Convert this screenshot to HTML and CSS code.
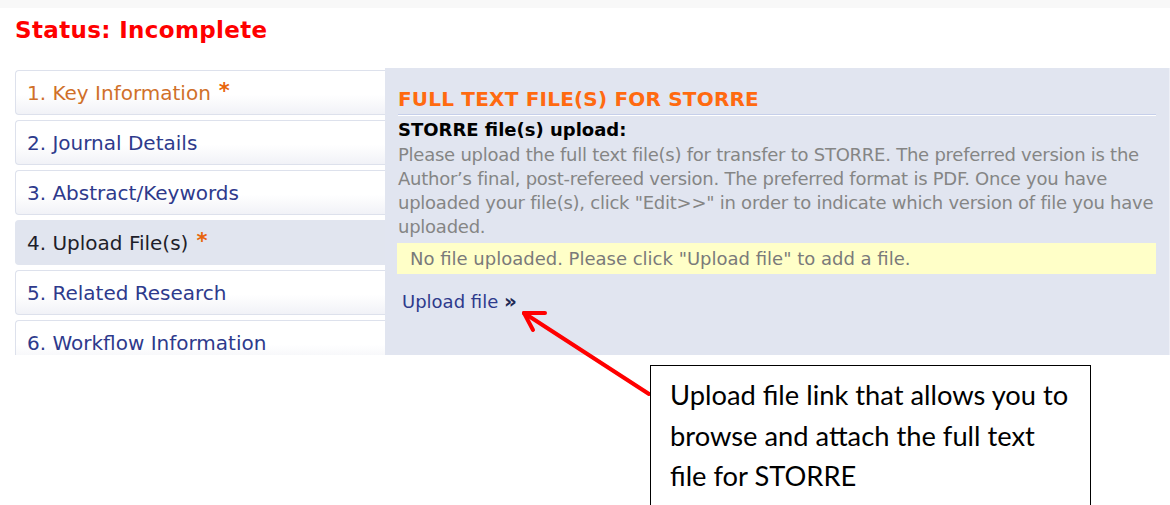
FILE: index.html
```html
<!DOCTYPE html>
<html>
<head>
<meta charset="utf-8">
<link rel="stylesheet" href="styles.css">
</head>
<body>
<div class="topstrip"></div>
<h1 class="status">Status: Incomplete</h1>
<div class="workspace">
  <ul class="tabs">
    <li class="tab tab-done">1. Key Information <span class="req">*</span></li>
    <li class="tab">2. Journal Details</li>
    <li class="tab">3. Abstract/Keywords</li>
    <li class="tab tab-active">4. Upload File(s) <span class="req">*</span></li>
    <li class="tab">5. Related Research</li>
    <li class="tab">6. Workflow Information</li>
  </ul>
  <section class="panel">
    <h2 class="panel-title">FULL TEXT FILE(S) FOR STORRE</h2>
    <h3 class="panel-sub">STORRE file(s) upload:</h3>
    <p class="panel-help">Please upload the full text file(s) for transfer to STORRE. The preferred version is the Author’s final, post-refereed version. The preferred format is PDF. Once you have uploaded your file(s), click "Edit&gt;&gt;" in order to indicate which version of file you have uploaded.</p>
    <div class="notice">No file uploaded. Please click "Upload file" to add a file.</div>
    <a class="upload-link" href="#">Upload file <span class="chev">»</span></a>
  </section>
</div>

<svg class="arrow" width="1170" height="505" viewBox="0 0 1170 505">
  <g stroke="#ff0000" stroke-width="4" stroke-linecap="round" fill="none">
    <line x1="649" y1="394" x2="524" y2="313"/>
    <line x1="524" y1="313" x2="545" y2="313"/>
    <line x1="524" y1="313" x2="533" y2="330"/>
  </g>
</svg>

<div class="callout">Upload file link that allows you to browse and attach the full text file for STORRE</div>
</body>
</html>
```

FILE: styles.css
```css
html, body {
  margin: 0;
  padding: 0;
  background: #ffffff;
  width: 1170px;
  height: 505px;
  overflow: hidden;
  position: relative;
}

.topstrip {
  height: 8px;
  background: #f8f8f8;
}

.status {
  margin: 0;
  padding: 8px 0 0 15px;
  height: 60px;
  box-sizing: border-box;
  font-family: "DejaVu Sans", Verdana, sans-serif;
  font-weight: bold;
  font-size: 23px;
  line-height: 28px;
  color: #ff0000;
  letter-spacing: 0.35px;
}

.workspace {
  display: flex;
  height: 287px;
  overflow: hidden;
}

.tabs {
  list-style: none;
  margin: 2px 0 0 15px;
  padding: 0;
  width: 370px;
  display: flex;
  flex-direction: column;
  gap: 5px;
}

.tab {
  height: 45px;
  box-sizing: border-box;
  flex: none;
  display: flex;
  align-items: center;
  padding: 0 0 0 11px;
  border: 1px solid #dde1ec;
  border-right: none;
  border-radius: 4px 0 0 4px;
  background: linear-gradient(#ffffff 0%, #ffffff 55%, #f1f2f7 100%);
  font-family: "DejaVu Sans", Verdana, sans-serif;
  font-size: 20px;
  color: #2e3a8c;
}

.tab-done {
  color: #d0702a;
}

.tab-active {
  background: #e1e5ef;
  border-color: #e1e5ef;
  color: #1e1e2a;
}

.req {
  color: #e8650c;
  font-weight: bold;
  margin-left: 8px;
  font-size: 21px;
  align-self: flex-start;
  margin-top: 8px;
}

.panel {
  width: 785px;
  background: #e1e5f0;
  padding: 0 0 0 13px;
  box-sizing: border-box;
  font-family: "DejaVu Sans", Verdana, sans-serif;
  border-right: 1px solid #eef0f7;
}

.panel-title {
  margin: 19px 13px 0 0;
  font-size: 20px;
  font-weight: bold;
  color: #ff6a10;
  line-height: 24px;
  padding-bottom: 3px;
  border-bottom: 1px solid #c6cfea;
  box-shadow: 0 1px 0 #ffffff;
  letter-spacing: 0.2px;
}

.panel-sub {
  margin: 5px 0 0 0;
  font-size: 18px;
  font-weight: bold;
  color: #000000;
  line-height: 20px;
}

.panel-help {
  margin: 3px 0 0 0;
  font-size: 18px;
  line-height: 24px;
  color: #858585;
  letter-spacing: -0.25px;
}

.notice {
  margin: 4px 13px 0 -1px;
  height: 31px;
  box-sizing: border-box;
  padding: 1px 0 0 13px;
  line-height: 30px;
  background: #ffffc8;
  font-size: 18px;
  color: #7a7a7a;
}

.upload-link {
  display: inline-block;
  margin: 16px 0 0 4px;
  font-size: 18px;
  line-height: 22px;
  color: #2e3a8c;
  text-decoration: none;
}

.chev {
  color: #1f2a55;
  font-weight: bold;
  font-size: 20px;
}

.arrow {
  position: absolute;
  left: 0;
  top: 0;
  pointer-events: none;
}

.callout {
  position: absolute;
  left: 650px;
  top: 365px;
  width: 441px;
  height: 160px;
  box-sizing: border-box;
  border: 1.5px solid #000000;
  background: #ffffff;
  padding: 9px 19px 0 19px;
  font-family: "Lato", "Liberation Sans", sans-serif;
  font-size: 27.3px;
  line-height: 40.5px;
  color: #000000;
}
```
